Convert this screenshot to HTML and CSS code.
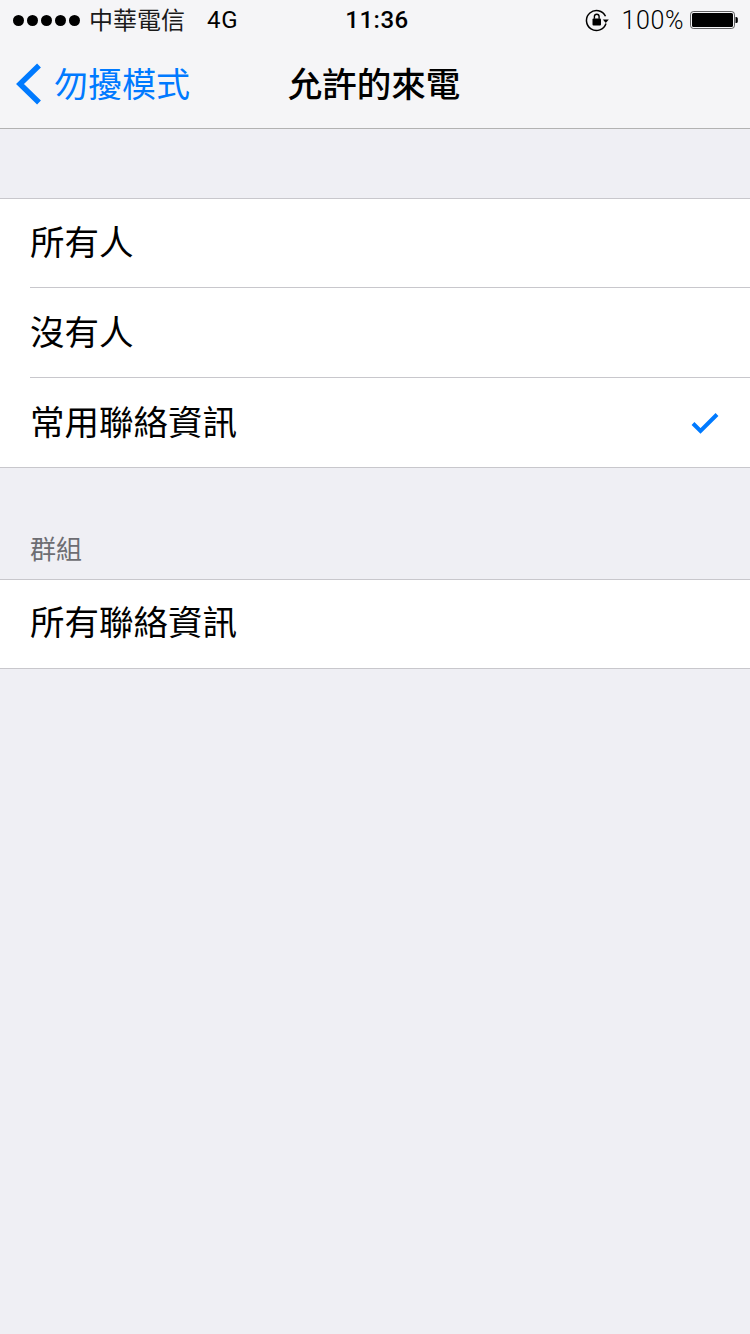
FILE: index.html
```html
<!DOCTYPE html>
<html lang="zh-Hant">
<head>
<meta charset="utf-8">
<title>允許的來電</title>
<link rel="stylesheet" href="styles.css">
</head>
<body>
<header class="topbar">
  <div class="status">
    <div class="status-left">
      <div class="dots"><i></i><i></i><i></i><i></i><i></i></div>
      <span class="carrier">中華電信</span>
      <span class="net">4G</span>
    </div>
    <div class="clock">11:36</div>
    <div class="status-right">
      <svg class="rotlock" width="24" height="24" viewBox="0 0 24 24" aria-hidden="true">
        <path d="M20.5 8.2A10 10 0 1 0 21 15.5" fill="none" stroke="#000" stroke-width="1.5"/>
        <path d="M17.8 11.5h6l-3 3.6z" fill="#000"/>
        <rect x="7.5" y="10.5" width="8.5" height="7" rx="1" fill="#000"/>
        <path d="M9.4 10.8V8.6a2.35 2.35 0 0 1 4.7 0v2.2" fill="none" stroke="#000" stroke-width="1.4"/>
      </svg>
      <span class="pct">100%</span>
      <svg class="battery" width="48" height="20" viewBox="0 0 48 20" aria-hidden="true">
        <rect x="0.5" y="1.500" width="44" height="17" rx="3" fill="none" stroke="#000" stroke-width="1" opacity=".6"/>
        <rect x="2" y="3" width="41" height="14" rx="1.5" fill="#000"/>
        <path d="M45.5 7h.7a1.6 1.6 0 0 1 1.6 1.6v2.8a1.6 1.6 0 0 1-1.6 1.6h-.7z" fill="#000"/>
      </svg>
    </div>
  </div>
  <nav class="navbar">
    <div class="back">
      <svg class="chevron" width="28" height="44" viewBox="0 0 28 44" aria-hidden="true">
        <path d="M25 3.5 6 22l19 18.500" fill="none" stroke="#007aff" stroke-width="5.500"/>
      </svg>
      <span>勿擾模式</span>
    </div>
    <h1 class="title">允許的來電</h1>
  </nav>
</header>
<main>
  <ul class="group first">
    <li class="row"><span>所有人</span></li>
    <li class="row row-tall"><span>沒有人</span></li>
    <li class="row"><span>常用聯絡資訊</span>
      <svg class="check" width="28" height="22" viewBox="0 0 28 22" aria-hidden="true">
        <path d="M2 11.500 9.500 19 26 2.500" fill="none" stroke="#007aff" stroke-width="4"/>
      </svg>
    </li>
  </ul>
  <h2 class="section-label">群組</h2>
  <ul class="group">
    <li class="row"><span>所有聯絡資訊</span></li>
  </ul>
</main>
</body>
</html>
```
FILE: styles.css
```css
* { box-sizing: border-box; }
html, body { margin: 0; padding: 0; }
body {
  width: 750px;
  height: 1334px;
  overflow: hidden;
  background: #efeff4;
  color: #000;
  font-family: "Liberation Sans", "Noto Sans CJK TC", sans-serif;
}
.topbar {
  height: 129px;
  background: #f5f5f7;
  border-bottom: 1px solid #b2b2b2;
}
.status {
  height: 40px;
  padding: 0 12px 0 13px;
  display: grid;
  grid-template-columns: 1fr auto 1fr;
  align-items: center;
  font-family: Roboto, "Noto Sans CJK TC", sans-serif;
  font-size: 24px;
}
.status-left, .status-right { display: flex; align-items: center; }
.status-right { justify-content: flex-end; }
.dots { display: flex; gap: 3px; margin-right: 9px; }
.dots i { width: 11px; height: 11px; border-radius: 50%; background: #000; }
.carrier { color: #1a1a1a; font-size: 24px; transform: translateY(-2px); }
.net { margin-left: 22px; font-size: 24px; letter-spacing: .8px; }
.clock { font-weight: 500; font-size: 24px; letter-spacing: .5px; margin-left: 3px; }
.rotlock { margin-right: 13px; }
.pct { margin-right: 6px; font-size: 25px; font-weight: 300; letter-spacing: .6px; }
.navbar {
  position: relative;
  height: 88px;
  display: flex;
  align-items: center;
  justify-content: center;
  padding: 0 2px 4px 0;
}
.back {
  position: absolute;
  left: 14px;
  top: 0;
  bottom: 0;
  display: flex;
  align-items: center;
  gap: 12px;
  color: #007aff;
  font-size: 34px;
}
.back span { transform: translateY(-2px); }
.title { margin: 0; font-size: 34.5px; font-weight: 500; }
.group {
  list-style: none;
  margin: 0;
  padding: 0;
  background: #fff;
  border-top: 1px solid #c8c7cc;
  border-bottom: 1px solid #c8c7cc;
}
.group.first { margin-top: 69px; }
.row {
  position: relative;
  height: 89px;
  margin-left: 30px;
  padding: 0 31px 6px 0;
  display: flex;
  align-items: center;
  justify-content: space-between;
  font-size: 34.5px;
  border-bottom: 1px solid #c8c7cc;
}
.row-tall { height: 90px; }
.row:last-child { border-bottom: 0; height: 89px; }
.group:last-child .row:last-child { height: 88px; padding-bottom: 8px; }
.check { margin-top: 6px; }
.section-label {
  margin: 0;
  height: 111px;
  padding: 64px 30px 0;
  font-size: 26px;
  line-height: 36px;
  font-weight: 400;
  color: #6d6d72;
}
```
